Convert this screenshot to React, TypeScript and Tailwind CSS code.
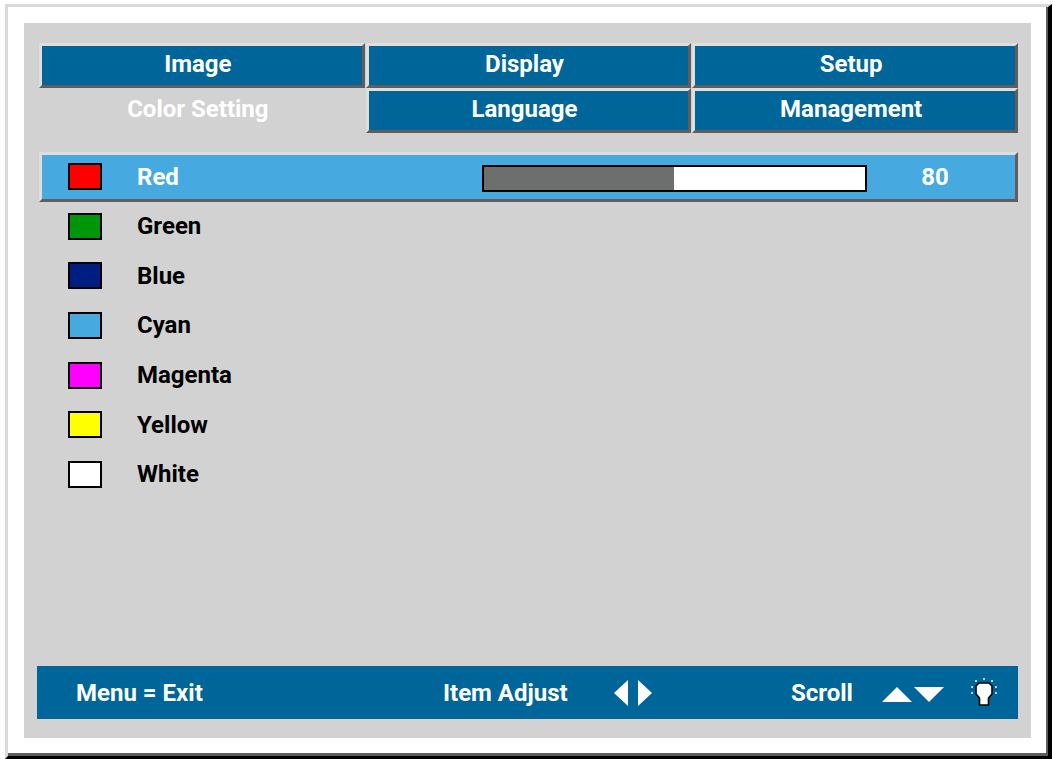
import { useState } from "react";
import clsx from "clsx";

const tabs = [
  "Image",
  "Display",
  "Setup",
  "Color Setting",
  "Language",
  "Management",
];

const colors = [
  { name: "Red", swatch: "bg-[#ff0000]" },
  { name: "Green", swatch: "bg-[#00960a]" },
  { name: "Blue", swatch: "bg-[#001e82]" },
  { name: "Cyan", swatch: "bg-[#46aae1]" },
  { name: "Magenta", swatch: "bg-[#ff00ff]" },
  { name: "Yellow", swatch: "bg-[#ffff00]" },
  { name: "White", swatch: "bg-white" },
];

const MAX_LEVEL = 160;

// raised edge: light on the top and left, dark on the bottom and right
const bevel =
  "border-t-[#dedede] border-l-[#dedede] border-r-[#625c5a] border-b-[#625c5a]";

interface TabProps {
  label: string;
  active: boolean;
  onSelect: () => void;
}

function Tab({ label, active, onSelect }: TabProps) {
  return (
    <button
      type="button"
      onClick={onSelect}
      className={clsx(
        "h-[45px] border-3 pr-2 pb-1 text-white",
        active ? "border-transparent" : clsx("bg-[#006699]", bevel)
      )}
    >
      {label}
    </button>
  );
}

interface ColorRowProps {
  name: string;
  swatch: string;
  level: number;
  active: boolean;
  onSelect: () => void;
  onChange: (level: number) => void;
}

function ColorRow({
  name,
  swatch,
  level,
  active,
  onSelect,
  onChange,
}: ColorRowProps) {
  const percent = (level / MAX_LEVEL) * 100;

  return (
    <li
      className={clsx(
        "grid grid-cols-[34px_380fr_385fr_148fr] items-center border-3 pl-[26px]",
        active
          ? clsx("bg-[#46aae1] text-white", bevel)
          : "border-transparent text-black"
      )}
    >
      <span className={clsx("h-[27px] border-2 border-black", swatch)} />
      {active ? (
        <>
          <label htmlFor="level" className="pl-[35px]">
            {name}
          </label>
          <input
            id="level"
            type="range"
            min={0}
            max={MAX_LEVEL}
            value={level}
            onChange={(e) => onChange(Number(e.target.value))}
            className="mt-1 h-[27px] w-full appearance-none border-2 border-black [&::-webkit-slider-thumb]:w-0 [&::-webkit-slider-thumb]:appearance-none"
            style={{
              background: `linear-gradient(to right, #6e6e6e ${percent}%, #ffffff ${percent}%)`,
            }}
          />
          <output htmlFor="level" className="pr-3 text-center">
            {level}
          </output>
        </>
      ) : (
        <button type="button" onClick={onSelect} className="pl-[35px] text-left">
          {name}
        </button>
      )}
    </li>
  );
}

function LampIcon() {
  return (
    <svg width="26" height="30" viewBox="0 0 26 30" aria-hidden="true">
      <path
        d="M8 5H18L21 8V16L17.5 20V27H8.5V20L5 16V8Z"
        fill="#ffffff"
        stroke="#000000"
        strokeWidth="1.6"
      />
      <g fill="#9fdcf5">
        <rect x="12" y="0" width="2" height="2" />
        <rect x="4" y="2" width="2" height="2" />
        <rect x="20" y="2" width="2" height="2" />
        <rect x="0" y="8" width="2" height="2" />
        <rect x="24" y="8" width="2" height="2" />
        <rect x="0" y="14" width="2" height="2" />
        <rect x="24" y="14" width="2" height="2" />
      </g>
    </svg>
  );
}

function Footer() {
  return (
    <footer className="mt-auto -ml-0.5 grid h-[53px] grid-cols-[367fr_348fr_206fr] items-center bg-[#006699] pr-[21px] pl-[39px] text-white">
      <span>Menu = Exit</span>
      <div className="flex items-center gap-[46px]">
        <span>Item Adjust</span>
        <svg width="38" height="26" viewBox="0 0 38 26" fill="#ffffff" aria-hidden="true">
          <path d="M14 0V26L0 13Z" />
          <path d="M24 0V26L38 13Z" />
        </svg>
      </div>
      <div className="flex items-center justify-between">
        <span>Scroll</span>
        <div className="flex items-center gap-[27px]">
          <svg width="62" height="18" viewBox="0 0 62 18" fill="#ffffff" aria-hidden="true">
            <path d="M0 18H30L15 3Z" />
            <path d="M32 3H62L47 18Z" />
          </svg>
          <LampIcon />
        </div>
      </div>
    </footer>
  );
}

export default function App() {
  const [tab, setTab] = useState("Color Setting");
  const [color, setColor] = useState("Red");
  const [levels, setLevels] = useState<Record<string, number>>({ Red: 80 });

  return (
    <div className="flex min-h-screen bg-white pt-1 pr-px pl-[5px] font-['Roboto',sans-serif] text-2xl font-bold">
      <div className="flex flex-1 border-t-3 border-r-4 border-b-3 border-l-3 border-t-[#d9d9d9] border-r-black border-b-black border-l-[#d9d9d9]">
        <div className="flex flex-1 border-r-2 border-b-3 border-[#5c5c5c] bg-white pt-4 pr-[15px] pb-[15px] pl-4">
          <main className="flex flex-1 flex-col bg-[#d2d2d2] pt-5 pr-[13px] pb-[19px] pl-[15px]">
            <nav className="grid grid-cols-3 gap-x-px">
              {tabs.map((label) => (
                <Tab
                  key={label}
                  label={label}
                  active={label === tab}
                  onSelect={() => setTab(label)}
                />
              ))}
            </nav>

            <ul className="mt-[19px] mb-6 grid h-[347px] grid-rows-7">
              {colors.map(({ name, swatch }) => (
                <ColorRow
                  key={name}
                  name={name}
                  swatch={swatch}
                  level={levels[name] ?? 80}
                  active={name === color}
                  onSelect={() => setColor(name)}
                  onChange={(level) => setLevels({ ...levels, [name]: level })}
                />
              ))}
            </ul>

            <Footer />
          </main>
        </div>
      </div>
    </div>
  );
}
